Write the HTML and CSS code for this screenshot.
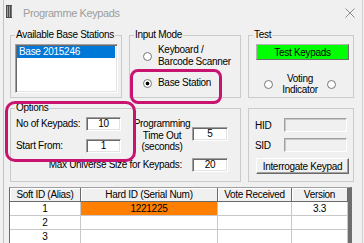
FILE: index.html
```html
<!DOCTYPE html>
<html lang="en">
<head>
  <meta charset="UTF-8" />
  <title>Programme Keypads</title>
  <link rel="stylesheet" href="styles.css">
</head>
<body>

  <div class="window">
    <!-- Title bar (inactive) -->
    <div class="titlebar">
      <svg class="app-icon" width="6" height="13" viewBox="0 0 6 13">
        <rect width="6" height="13" fill="#4b4b4b"/>
        <rect x="1" y="1" width="1" height="11" fill="#9c9c9c"/>
        <rect x="3" y="1" width="1" height="11" fill="#9c9c9c"/>
        <rect x="5" y="1" width="1" height="11" fill="#777"/>
      </svg>
      <span class="title">Programme Keypads</span>
      <svg class="close" width="10" height="10" viewBox="0 0 10 10">
        <path d="M0.5 0.5 L9.5 9.5 M9.5 0.5 L0.5 9.5" stroke="#8f8f8f" stroke-width="1" fill="none"/>
      </svg>
    </div>

    <div class="main">
      <div class="panels">
        <!-- Available base stations -->
        <div class="group stations">
          <span class="group-title">Available Base Stations</span>
          <div class="listbox">
            <div class="item selected">Base 2015246</div>
          </div>
        </div>

        <!-- Input mode -->
        <div class="group mode">
          <span class="group-title">Input Mode</span>
          <label class="radio">
            <span class="radio-btn"></span>
            <span>Keyboard /<br>Barcode Scanner</span>
          </label>
          <label class="radio marked">
            <span class="radio-btn checked"></span>
            <span>Base Station</span>
          </label>
        </div>

        <!-- Test -->
        <div class="group test">
          <span class="group-title">Test</span>
          <button class="btn green">Test Keypads</button>
          <div class="voting">
            <span class="radio-btn"></span>
            <span class="voting-label">Voting<br>Indicator</span>
            <span class="radio-btn"></span>
          </div>
        </div>

        <!-- Options -->
        <div class="group options">
          <span class="group-title">Options</span>
          <span class="field-label">No of Keypads:</span>
          <div class="textbox">10</div>
          <span class="timeout-label">Programming<br>Time Out<br>(seconds)</span>
          <div class="textbox timeout">5</div>
          <span class="field-label">Start From:</span>
          <div class="textbox">1</div>
          <span class="field-label max-label">Max Universe Size for Keypads:</span>
          <div class="textbox">20</div>
        </div>

        <!-- HID / SID -->
        <div class="group ids">
          <div class="id-row">
            <span class="id-label">HID</span>
            <div class="textbox disabled"></div>
          </div>
          <div class="id-row">
            <span class="id-label">SID</span>
            <div class="textbox disabled"></div>
          </div>
          <button class="btn interrogate">Interrogate Keypad</button>
        </div>
      </div>

      <!-- Keypad grid -->
      <div class="grid-wrap">
        <table class="keypads">
          <colgroup>
            <col class="c-soft">
            <col class="c-hard">
            <col class="c-vote">
            <col class="c-ver">
          </colgroup>
          <thead>
            <tr>
              <th>Soft ID (Alias)</th>
              <th>Hard ID (Serial Num)</th>
              <th>Vote Received</th>
              <th>Version</th>
            </tr>
          </thead>
          <tbody>
            <tr>
              <td>1</td>
              <td class="serial">1221225</td>
              <td></td>
              <td>3.3</td>
            </tr>
            <tr>
              <td>2</td>
              <td></td>
              <td></td>
              <td></td>
            </tr>
            <tr>
              <td>3</td>
              <td></td>
              <td></td>
              <td></td>
            </tr>
          </tbody>
        </table>
      </div>
    </div>
  </div>

</body>
</html>
```

FILE: styles.css
```css
/* ----- Reset ----- */
* {
  margin: 0;
  padding: 0;
  box-sizing: border-box;
}

html, body {
  width: 364px;
  height: 243px;
  overflow: hidden;
  background: #f0f0f0;
}

body {
  font-family: "Liberation Sans", Arial, sans-serif;
  font-size: 10px;
  letter-spacing: -0.3px;
  color: #000;
}

/* ----- Window frame ----- */
.window {
  width: 360px;
  height: 243px;
  margin-left: 3px;
  border-left: 1px solid #c4c4c4;
  border-right: 1px solid #d2d2d2;
}

.titlebar {
  height: 29px;
  display: flex;
  align-items: flex-start;
  padding: 5px 7px 0 2px;
}
.app-icon {
  flex: none;
}
.title {
  margin: 1px 0 0 11px;
  font-size: 11px;
  line-height: 14px;
  letter-spacing: -0.4px;
  color: #9d9d9d;
}
.close {
  margin: 3px 0 0 auto;
}

/* ----- Content ----- */
.main {
  padding: 6px 0 0 6px;
}

.panels {
  display: grid;
  grid-template-columns: 112px 112px 106px;
  grid-template-rows: 63px 74px;
  column-gap: 7px;
  row-gap: 10px;
}

/* Group boxes */
.group {
  position: relative;
  border: 1px solid #cacaca;
}
.group-title {
  position: absolute;
  top: -7px;
  left: 4px;
  padding: 0 1px;
  line-height: 12px;
  background: #f0f0f0;
  white-space: nowrap;
}

/* Sunken text box */
.textbox {
  height: 14px;
  line-height: 12px;
  text-align: center;
  background: #fff;
  border: 1px solid;
  border-color: #a0a0a0 #fff #fff #a0a0a0;
  box-shadow: inset 1px 1px #696969, inset -1px -1px #e3e3e3;
}
.textbox.disabled {
  background: #f0f0f0;
  box-shadow: inset 1px 1px #c8c8c8;
}

/* Classic push button */
.btn {
  display: block;
  width: 93px;
  height: 16px;
  font: inherit;
  letter-spacing: inherit;
  color: #000;
  background: #f0f0f0;
  border: 1px solid;
  border-color: #fff #696969 #696969 #fff;
  box-shadow: inset -1px -1px #a0a0a0;
}
.btn.green {
  background: #00ff00;
  border-color: #b4b4b4 #6e6e6e #6e6e6e #b4b4b4;
  box-shadow: none;
}

/* Radio buttons */
.radio-btn {
  flex: none;
  width: 9px;
  height: 9px;
  border-radius: 50%;
  background: #fff;
  border: 1px solid #777;
}
.radio-btn.checked {
  background: radial-gradient(circle, #000 0 1.6px, #fff 2.2px);
}

/* Available base stations */
.stations {
  display: flex;
  flex-direction: column;
  padding: 8px 3px 4px 4px;
}
.listbox {
  flex: 1;
  padding: 1px 2px 1px 1px;
  background: #fff;
  border: 1px solid;
  border-color: #a0a0a0 #fff #fff #a0a0a0;
  box-shadow: inset 1px 1px #696969, inset -1px -1px #e3e3e3;
}
.item {
  height: 12px;
  line-height: 12px;
  padding-left: 2px;
}
.item.selected {
  color: #fff;
  background: #0078d7;
}

/* Input mode */
.mode {
  display: flex;
  flex-direction: column;
  gap: 9px;
  padding: 8px 0 0 13px;
}
.radio {
  position: relative;
  display: flex;
  align-items: center;
  gap: 6px;
  line-height: 12px;
}
.radio.marked::after {
  content: "";
  position: absolute;
  left: -13px;
  top: -8px;
  width: 86px;
  height: 29px;
  border: 3px solid #c8146e;
  border-radius: 8px;
}

/* Test */
.test {
  padding: 8px 0 0 7px;
}
.voting {
  display: grid;
  grid-template-columns: 9px 1fr 9px;
  align-items: center;
  width: 72px;
  margin: 13px 0 0 8px;
  line-height: 11px;
  text-align: center;
}

/* Options */
.options {
  grid-column: 1 / span 2;
  display: grid;
  grid-template-columns: 70px 35px 71px 36px;
  grid-template-rows: 22px 19px 15px;
  align-items: start;
  padding: 8px 0 0 5px;
}
.options::before {
  content: "";
  position: absolute;
  left: -6px;
  top: -8px;
  width: 125px;
  height: 55px;
  border: 3px solid #c8146e;
  border-radius: 10px;
  z-index: 2;
}
.field-label {
  line-height: 14px;
  white-space: nowrap;
}
.timeout-label {
  grid-column: 3;
  grid-row: 1 / span 2;
  margin-top: 1px;
  padding-left: 11px;
  line-height: 11.5px;
  text-align: center;
}
.textbox.timeout {
  grid-column: 4;
  grid-row: 1 / span 2;
  margin-top: 10px;
}
.max-label {
  grid-column: 1 / span 3;
  padding-right: 10px;
  text-align: right;
}

/* HID / SID */
.ids {
  padding: 9px 6px 0 6px;
}
.id-row {
  display: flex;
  align-items: center;
  height: 14px;
  margin-bottom: 6px;
}
.id-label {
  width: 29px;
}
.id-row .textbox {
  width: 63px;
}
.btn.interrogate {
  margin-left: 1px;
}

/* ----- Keypad grid ----- */
.grid-wrap {
  width: 343px;
  height: 60px;
  margin: 5px 0 0 -1px;
  border-left: 1px solid #696969;
  border-top: 1px solid #a0a0a0;
  border-right: 4px solid #6e6e6e;
  overflow: hidden;
}
.keypads {
  width: 338px;
  table-layout: fixed;
  border-collapse: separate;
  border-spacing: 0;
}
.c-soft { width: 71px; }
.c-hard { width: 137px; }
.c-vote { width: 74px; }
.c-ver  { width: 56px; }

.keypads th,
.keypads td {
  padding: 0;
  line-height: 13px;
  text-align: center;
  white-space: nowrap;
}
.keypads th {
  font-weight: normal;
  background: #f0f0f0;
  border-right: 1px solid #696969;
  border-bottom: 1px solid #696969;
  box-shadow: inset 1px 1px #fff;
}
.keypads td {
  background: #fff;
  border-right: 1px solid #c8c8c8;
  border-bottom: 1px solid #c8c8c8;
}
.keypads td.serial {
  background: #ff8000;
}
```
